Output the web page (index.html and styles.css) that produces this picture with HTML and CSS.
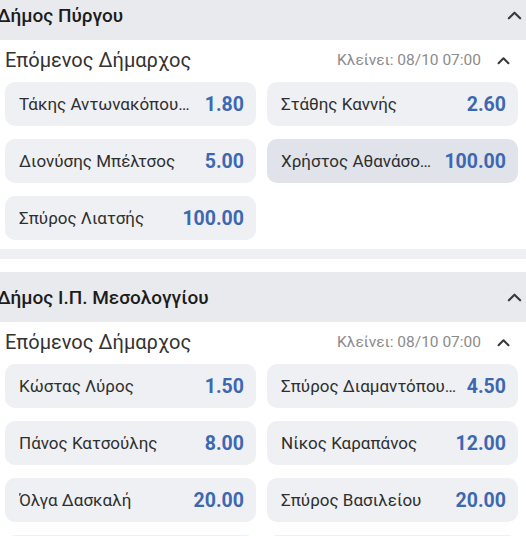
FILE: index.html
```html
<!DOCTYPE html>
<html lang="el">
<head>
<meta charset="utf-8">
<link rel="stylesheet" href="styles.css">
</head>
<body>
<div class="page">
  <section class="event first">
    <div class="event-head">
      <span class="event-title">Δήμος Πύργου</span>
      <svg class="chev big" viewBox="0 0 16 10"><polyline points="2,8.5 8,2.5 14,8.5"/></svg>
    </div>
    <div class="market">
      <div class="market-head">
        <span class="market-title">Επόμενος Δήμαρχος</span>
        <span class="closes">Κλείνει: 08/10 07:00</span>
        <svg class="chev" viewBox="0 0 14 10"><polyline points="1.5,8 7,2.5 12.5,8"/></svg>
      </div>
      <div class="grid">
        <div class="sel"><span class="name">Τάκης Αντωνακόπου…</span><span class="odd">1.80</span></div>
        <div class="sel"><span class="name">Στάθης Καννής</span><span class="odd">2.60</span></div>
        <div class="sel"><span class="name">Διονύσης Μπέλτσος</span><span class="odd">5.00</span></div>
        <div class="sel active"><span class="name">Χρήστος Αθανάσο…</span><span class="odd">100.00</span></div>
        <div class="sel"><span class="name">Σπύρος Λιατσής</span><span class="odd">100.00</span></div>
      </div>
    </div>
    <div class="sep"></div>
  </section>
  <section class="event second">
    <div class="event-head">
      <span class="event-title">Δήμος Ι.Π. Μεσολογγίου</span>
      <svg class="chev big" viewBox="0 0 16 10"><polyline points="2,8.5 8,2.5 14,8.5"/></svg>
    </div>
    <div class="market">
      <div class="market-head">
        <span class="market-title">Επόμενος Δήμαρχος</span>
        <span class="closes">Κλείνει: 08/10 07:00</span>
        <svg class="chev" viewBox="0 0 14 10"><polyline points="1.5,8 7,2.5 12.5,8"/></svg>
      </div>
      <div class="grid">
        <div class="sel"><span class="name">Κώστας Λύρος</span><span class="odd">1.50</span></div>
        <div class="sel"><span class="name">Σπύρος Διαμαντόπου…</span><span class="odd">4.50</span></div>
        <div class="sel"><span class="name">Πάνος Κατσούλης</span><span class="odd">8.00</span></div>
        <div class="sel"><span class="name">Νίκος Καραπάνος</span><span class="odd">12.00</span></div>
        <div class="sel"><span class="name">Όλγα Δασκαλή</span><span class="odd">20.00</span></div>
        <div class="sel"><span class="name">Σπύρος Βασιλείου</span><span class="odd">20.00</span></div>
        <div class="sel"><span class="name">&nbsp;</span><span class="odd"></span></div>
        <div class="sel"><span class="name">&nbsp;</span><span class="odd"></span></div>
      </div>
    </div>
  </section>
</div>
</body>
</html>
```
FILE: styles.css
```css
html, body {
  margin: 0;
  padding: 0;
  background: #ffffff;
  overflow: hidden;
}
body {
  font-family: Roboto, "Noto Sans", "DejaVu Sans", sans-serif;
  color: #2b2b2b;
}
.page {
  margin-top: -10px;
}
.event-head {
  height: 50px;
  background: #e9eaed;
  display: flex;
  align-items: center;
  justify-content: space-between;
  padding-right: 4px;
}
.event-title {
  margin-left: -3px;
  font-size: 19px;
  font-weight: 500;
  color: #1c1c1c;
}
.chev {
  width: 13px;
  height: 9px;
  fill: none;
  stroke: #3a3a3a;
  stroke-width: 2.3;
  stroke-linecap: round;
  stroke-linejoin: round;
}
.chev.big {
  width: 15px;
  height: 10px;
}
.market-head {
  height: 40px;
  display: flex;
  align-items: center;
  padding: 0 16px 0 5px;
}
.market-title {
  font-size: 20px;
  color: #333333;
  flex: 1;
}
.closes {
  font-size: 15.5px;
  color: #8b8b8b;
  margin-right: 16px;
}
.grid {
  margin-top: 2px;
  display: grid;
  grid-template-columns: 1fr 1fr;
  column-gap: 11px;
  row-gap: 13px;
  padding: 0 8px 9px 5px;
}
.sel {
  height: 44px;
  border-radius: 10px;
  background: #eef0f3;
  display: flex;
  align-items: center;
  padding: 0 12px 0 14px;
  gap: 8px;
}
.sel.active {
  background: #e0e3ea;
}
.name {
  flex: 1;
  min-width: 0;
  white-space: nowrap;
  overflow: hidden;
  text-overflow: ellipsis;
  font-size: 17px;
  color: #2f2f2f;
}
.odd {
  font-size: 19.5px;
  font-weight: 700;
  color: #3d68b1;
}
.sep {
  height: 10px;
  background: #eef0f3;
  margin-bottom: 13px;
}
```
